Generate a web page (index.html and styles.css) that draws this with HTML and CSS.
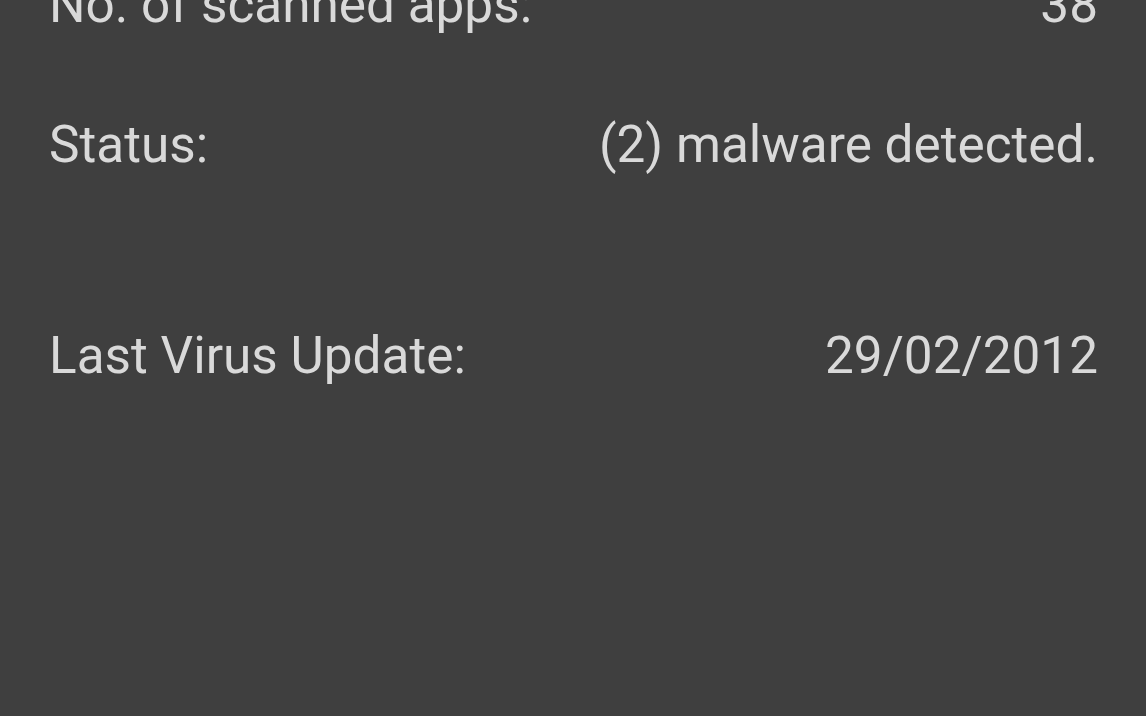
FILE: index.html
```html
<!DOCTYPE html>
<html>
<head>
<meta charset="utf-8">
<link rel="stylesheet" href="styles.css">
</head>
<body>
<div class="screen">
  <div class="list">
    <div class="row"><span class="label">No. of scanned apps:</span><span class="value">38</span></div>
    <div class="row"><span class="label">Status:</span><span class="value">(2) malware detected.</span></div>
    <div class="row row-update"><span class="label">Last Virus Update:</span><span class="value">29/02/2012</span></div>
  </div>
</div>
</body>
</html>
```
FILE: styles.css
```css
html, body {
  margin: 0;
  padding: 0;
  background: #3f3f3f;
}
.screen {
  width: 1146px;
  height: 716px;
  overflow: hidden;
  background: #3f3f3f;
  font-family: Roboto, "Noto Sans", sans-serif;
  color: #d9d9d9;
}
.list {
  display: flex;
  flex-direction: column;
  gap: 70px;
  margin-top: -30px;
  padding: 0 48px 0 49px;
}
.row {
  display: flex;
  justify-content: space-between;
  align-items: baseline;
  font-size: 51.3px;
  line-height: 70px;
  height: 70px;
}
.row-update {
  margin-top: 71px;
}
```
